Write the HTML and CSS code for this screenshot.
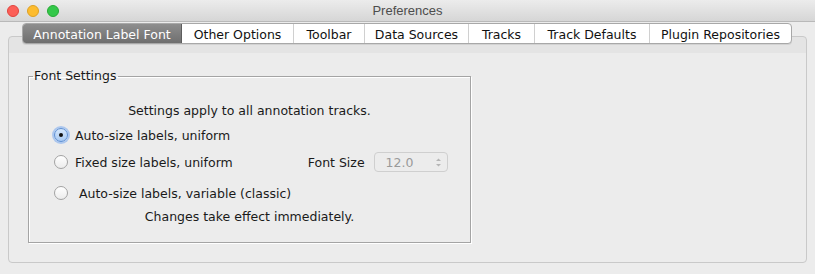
FILE: index.html
```html
<!DOCTYPE html>
<html>
<head>
<meta charset="utf-8">
<title>Preferences</title>
<link rel="stylesheet" href="styles.css">
</head>
<body>
<div class="window">
  <div class="titlebar">
    <div class="lights">
      <span class="light red"></span>
      <span class="light yellow"></span>
      <span class="light green"></span>
    </div>
    <div class="title">Preferences</div>
  </div>
  <div class="content">
    <div class="tabs">
      <div class="tab selected">Annotation Label Font</div>
      <div class="tab">Other Options</div>
      <div class="tab">Toolbar</div>
      <div class="tab">Data Sources</div>
      <div class="tab">Tracks</div>
      <div class="tab">Track Defaults</div>
      <div class="tab last">Plugin Repositories</div>
    </div>
    <div class="panel">
      <fieldset class="group">
        <legend>Font Settings</legend>
        <div class="note first">Settings apply to all annotation tracks.</div>
        <div class="row r1">
          <span class="radio checked"></span>
          <span class="label">Auto-size labels, uniform</span>
        </div>
        <div class="row r2">
          <span class="radio"></span>
          <span class="label">Fixed size labels, uniform</span>
          <span class="fs-label">Font Size</span>
          <span class="spinner">
            <span class="spin-value">12.0</span>
            <svg class="spin-arrows" width="7" height="11" viewBox="0 0 7 11">
              <path d="M1 4 L3.5 1.5 L6 4 Z" fill="#b5b5b5"/>
              <path d="M1 7 L3.5 9.5 L6 7 Z" fill="#b5b5b5"/>
            </svg>
          </span>
        </div>
        <div class="row r3">
          <span class="radio"></span>
          <span class="label wide">Auto-size labels, variable (classic)</span>
        </div>
        <div class="note last">Changes take effect immediately.</div>
      </fieldset>
    </div>
  </div>
</div>
</body>
</html>
```
FILE: styles.css
```css
html, body {
  margin: 0;
  padding: 0;
  background: #ececec;
}
body {
  width: 815px;
  height: 274px;
  overflow: hidden;
  font-family: "Lucida Grande", "DejaVu Sans", sans-serif;
  font-size: 12.5px;
  color: #1a1a1a;
}
.window {
  width: 815px;
  height: 274px;
  background: #ececec;
}
.titlebar {
  position: relative;
  height: 21px;
  border-bottom: 1px solid #b9b9b9;
  background: linear-gradient(#ececec, #d6d6d6);
  display: flex;
  align-items: center;
}
.lights {
  display: flex;
  gap: 8px;
  padding-left: 7px;
  padding-top: 0px;
}
.light {
  width: 12px;
  height: 12px;
  border-radius: 50%;
  box-sizing: border-box;
}
.light.red { background: #fc5f57; border: 1px solid #e0443e; }
.light.yellow { background: #fdbc2e; border: 1px solid #dea123; }
.light.green { background: #34c84a; border: 1px solid #27aa35; }
.title {
  position: absolute;
  left: 0;
  right: 0;
  top: 3px;
  text-align: center;
  font-family: "Liberation Sans", Arial, sans-serif;
  font-size: 13px;
  color: #4d4d4d;
}
.content {
  padding: 1px 8px 0 8px;
}
.tabs {
  position: relative;
  z-index: 1;
  display: flex;
  margin-left: 14px;
  width: 770px;
  height: 21px;
  box-sizing: border-box;
  border: 1px solid #a8a8a8;
  border-radius: 4px;
  background: #fff;
  box-shadow: 0 1px 0 rgba(0,0,0,0.08);
  overflow: hidden;
}
.tab {
  display: flex;
  align-items: center;
  justify-content: center;
  height: 19px;
  padding-top: 1px;
  box-sizing: border-box;
  border-right: 1px solid #d0d0d0;
  color: #111;
  white-space: nowrap;
  flex: none;
}
.tab.last { border-right: none; flex: 1; }
.tab.selected {
  background: linear-gradient(#8e8e8e, #6f6f6f);
  color: #fff;
  border-right: 1px solid #5d5d5d;
}
.tab:nth-child(1) { width: 159px; }
.tab:nth-child(2) { width: 112px; }
.tab:nth-child(3) { width: 71px; }
.tab:nth-child(4) { width: 104px; }
.tab:nth-child(5) { width: 66px; }
.tab:nth-child(6) { width: 115px; }
.panel {
  margin-top: -8px;
  height: 227px;
  box-sizing: border-box;
  border: 1px solid #c9c9c9;
  border-radius: 4px;
  background: linear-gradient(#e4e4e4 0, #e4e4e4 16px, #ececec 16px);
  padding: 31px 0 0 19px;
}
.group {
  margin: 0;
  width: 443px;
  height: 175px;
  box-sizing: border-box;
  padding: 0;
  border: 1px solid #a4a4a4;
  box-shadow: 1px 1px 0 #fff, inset 1px 1px 0 #fff;
}
.group legend {
  margin-left: 4px;
  padding: 0 2px 0 1px;
  line-height: 16px;
  height: 16px;
}
.note {
  text-align: center;
  height: 20px;
  line-height: 20px;
}
.note.first {
  margin-top: 17px;
}
.row {
  display: flex;
  align-items: center;
  padding-left: 25px;
  height: 26px;
}
.r1 { margin-top: 1px; }
.r2 { margin-top: 1px; }
.r3 { margin-top: 5px; }
.note.last { margin-top: 1px; }
.radio {
  width: 14px;
  height: 14px;
  box-sizing: border-box;
  border-radius: 50%;
  border: 1px solid #a3a3a3;
  background: linear-gradient(#ffffff, #ececec);
  margin-right: 7px;
  flex: none;
  display: flex;
  align-items: center;
  justify-content: center;
}
.radio.checked {
  border-color: #5b8fd6;
  background: linear-gradient(#d6e7fb, #a8c9f2);
  box-shadow: 0 0 0 2px rgba(120, 170, 240, 0.55);
}
.radio.checked::after {
  content: "";
  width: 4px;
  height: 4px;
  border-radius: 50%;
  background: #111;
}
.label.wide { margin-left: 4px; }
.fs-label {
  margin-left: 75px;
}
.spinner {
  margin-left: 9px;
  width: 74px;
  height: 20px;
  box-sizing: border-box;
  border: 1px solid #cfcfcf;
  border-radius: 4px;
  background: #ececec;
  display: flex;
  align-items: center;
  justify-content: space-between;
  padding: 0 5px 0 11px;
  color: #9a9a9a;
}
.spin-arrows { display: block; }
```
